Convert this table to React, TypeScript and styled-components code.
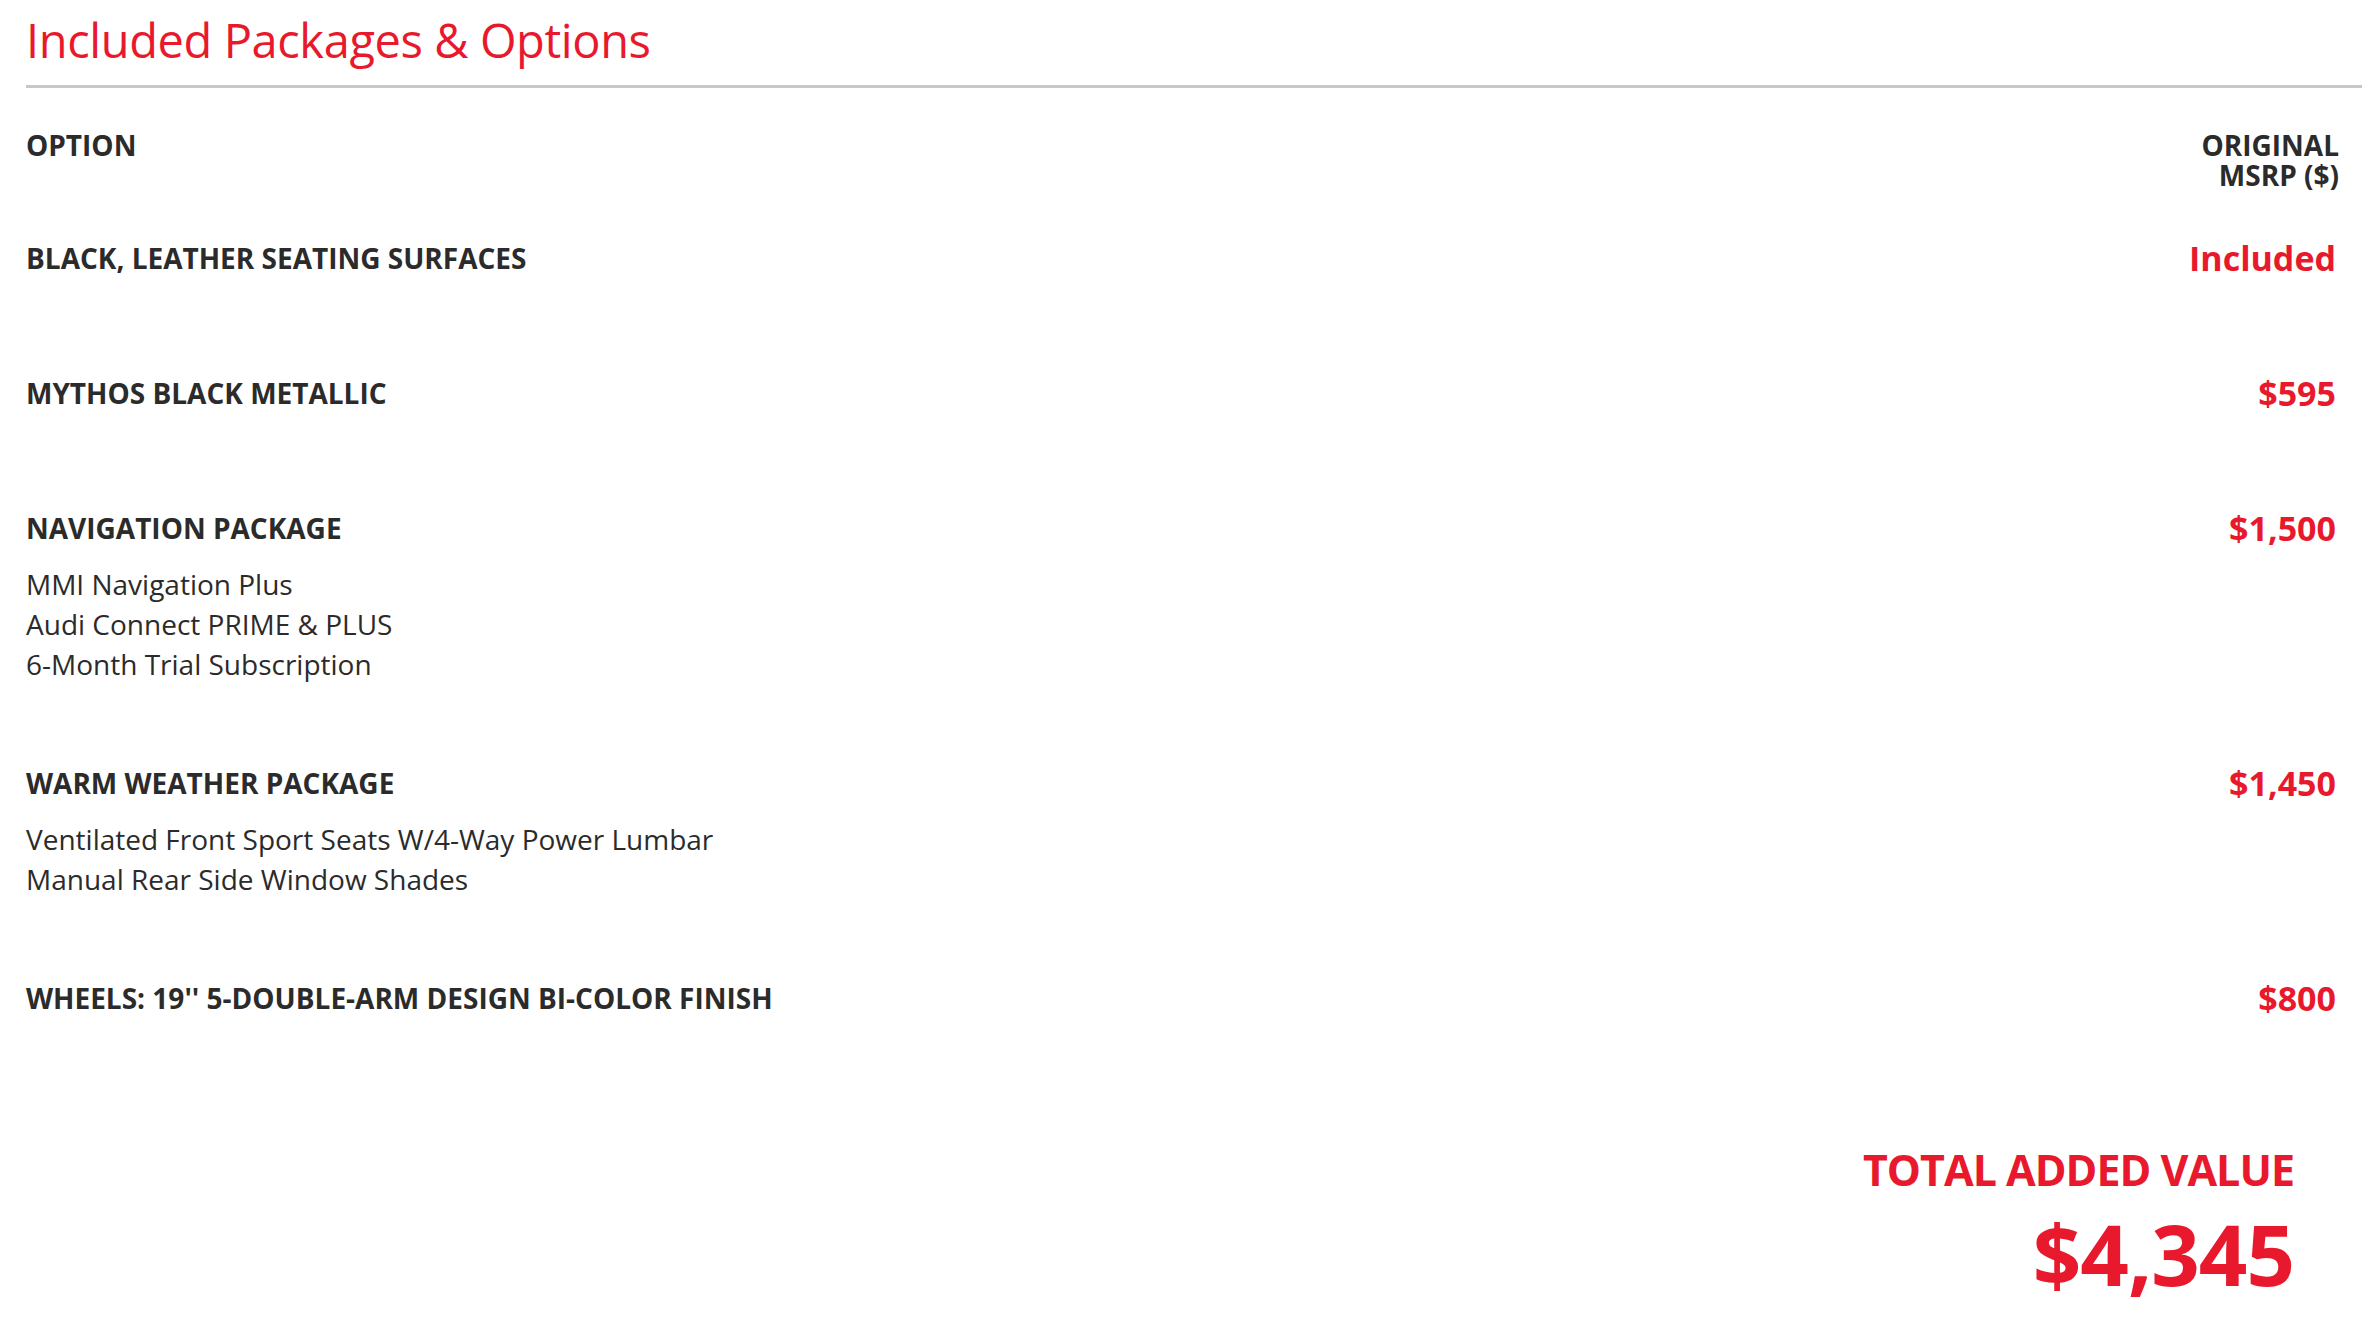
import React from 'react';
import styled, { createGlobalStyle } from 'styled-components';

const GlobalStyle = createGlobalStyle`
  html, body {
    margin: 0;
    padding: 0;
    background: #fff;
  }
  body {
    font-family: "Open Sans", "Noto Sans", sans-serif;
    color: #2b2b2b;
  }
`;

const RED = '#e8192c';

interface OptionItem {
  name: string;
  price: string;
  details: string[];
}

const options: OptionItem[] = [
  { name: 'BLACK, LEATHER SEATING SURFACES', price: 'Included', details: [] },
  { name: 'MYTHOS BLACK METALLIC', price: '$595', details: [] },
  {
    name: 'NAVIGATION PACKAGE',
    price: '$1,500',
    details: ['MMI Navigation Plus', 'Audi Connect PRIME & PLUS', '6-Month Trial Subscription'],
  },
  {
    name: 'WARM WEATHER PACKAGE',
    price: '$1,450',
    details: ['Ventilated Front Sport Seats W/4-Way Power Lumbar', 'Manual Rear Side Window Shades'],
  },
  { name: "WHEELS: 19'' 5-DOUBLE-ARM DESIGN BI-COLOR FINISH", price: '$800', details: [] },
];

const Page = styled.div`
  padding-left: 26px;
`;

const Title = styled.h1`
  margin: 0;
  padding: 10px 0 15px;
  font-size: 47px;
  line-height: 60px;
  letter-spacing: -0.4px;
  font-weight: 400;
  color: ${RED};
  border-bottom: 3px solid #c8c8c8;
`;

const Table = styled.div`
  padding-right: 23px;
`;

const HeaderRow = styled.div`
  display: flex;
  justify-content: space-between;
  align-items: flex-start;
  margin-top: 42px;
  margin-bottom: 50px;
`;

const HeaderCell = styled.div<{ $right?: boolean }>`
  font-size: 28px;
  line-height: 30px;
  font-weight: 700;
  color: #2b2b2b;
  text-align: ${p => (p.$right ? 'right' : 'left')};
`;

const Row = styled.div`
  display: flex;
  justify-content: space-between;
  align-items: flex-start;
  padding-bottom: 81px;
`;

const OptionCol = styled.div`
  display: flex;
  flex-direction: column;
`;

const OptionName = styled.div`
  font-size: 28px;
  line-height: 36px;
  font-weight: 700;
  color: #2b2b2b;
`;

const Details = styled.div`
  margin-top: 18px;
`;

const DetailLine = styled.div`
  font-size: 28px;
  line-height: 40px;
  font-weight: 400;
  color: #2b2b2b;
`;

const Price = styled.div`
  font-size: 34px;
  line-height: 36px;
  font-weight: 700;
  color: ${RED};
  padding-right: 3px;
  text-align: right;
`;

const Total = styled.div`
  display: flex;
  flex-direction: column;
  align-items: flex-end;
  margin-top: 27px;
  padding-right: 68px;
  color: ${RED};
  font-weight: 700;
`;

const TotalLabel = styled.div`
  font-size: 43px;
  line-height: 56px;
  letter-spacing: -1px;
`;

const TotalAmount = styled.div`
  font-size: 85px;
  line-height: 110px;
  letter-spacing: -1px;
`;

const App: React.FC = () => {
  return (
    <>
      <GlobalStyle />
      <Page>
        <Title>Included Packages &amp; Options</Title>
        <Table>
          <HeaderRow>
            <HeaderCell>OPTION</HeaderCell>
            <HeaderCell $right>
              ORIGINAL
              <br />
              MSRP ($)
            </HeaderCell>
          </HeaderRow>
          {options.map(option => (
            <Row key={option.name}>
              <OptionCol>
                <OptionName>{option.name}</OptionName>
                <Details>
                  {option.details.map(line => (
                    <DetailLine key={line}>{line}</DetailLine>
                  ))}
                </Details>
              </OptionCol>
              <Price>{option.price}</Price>
            </Row>
          ))}
        </Table>
        <Total>
          <TotalLabel>TOTAL ADDED VALUE</TotalLabel>
          <TotalAmount>$4,345</TotalAmount>
        </Total>
      </Page>
    </>
  );
};

export default App;
